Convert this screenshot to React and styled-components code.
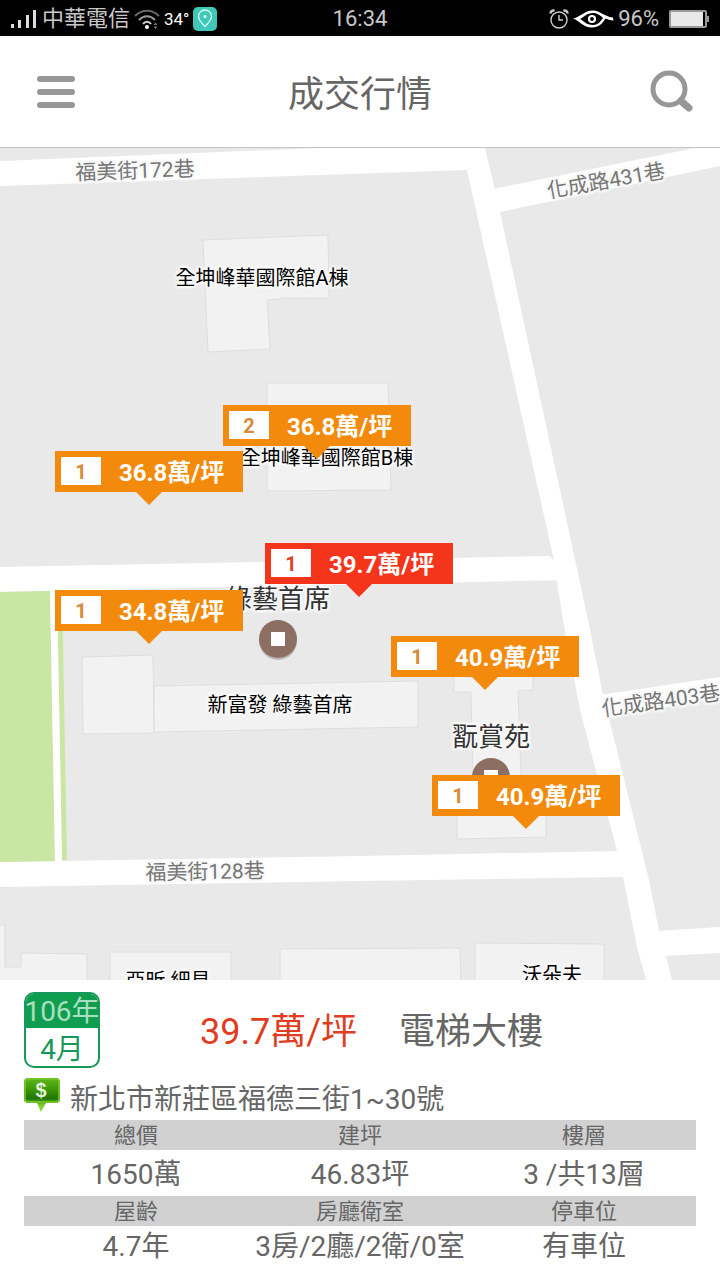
import React from 'react';
import styled, { createGlobalStyle } from 'styled-components';

const GlobalStyle = createGlobalStyle`
  * {
    box-sizing: border-box;
  }
  body {
    margin: 0;
    background: #fff;
    color: #666;
    font-family: Roboto, "Noto Sans CJK TC", sans-serif;
  }
  button {
    border: 0;
    padding: 0;
    background: none;
    font-family: inherit;
    cursor: pointer;
  }
`;

const Page = styled.div`
  display: flex;
  flex-direction: column;
  min-height: 100vh;
`;

const StatusBar = styled.div`
  display: grid;
  grid-template-columns: 1fr auto 1fr;
  align-items: center;
  height: 36px;
  padding: 0 10px;
  background: #000;
  color: #c8c8c8;
  font-size: 22px;
  line-height: 38px;
`;

const StatusGroup = styled.div`
  display: flex;
  align-items: center;
  justify-content: ${(props) => (props.$end ? 'flex-end' : 'flex-start')};
  gap: 4px;

  svg {
    flex: none;
  }
`;

const Temperature = styled.span`
  color: #fff;
  font-size: 17px;
`;

const Battery = styled.span`
  display: flex;
  padding-left: 6px;
`;

const Header = styled.header`
  display: flex;
  align-items: center;
  justify-content: space-between;
  height: 112px;
  padding: 0 26px;
  border-bottom: 1px solid #c4c4c4;
`;

const Title = styled.h1`
  margin: 0;
  padding-top: 6px;
  font-size: 36px;
  font-weight: 400;
  line-height: 48px;
`;

const IconButton = styled.button`
  display: flex;
  width: 56px;
  padding-left: 10px;
`;

const Map = styled.main`
  position: relative;
  flex: 1;
  min-height: 480px;
  overflow: hidden;
  background: #e9e9e9;
`;

const Streets = styled.svg`
  position: absolute;
  inset: 0;
  width: 100%;
  height: 100%;
`;

const labelKinds = {
  street: { size: 21, color: '#777' },
  building: { size: 20, color: '#000' },
  place: { size: 26, color: '#333' },
};

const MapLabel = styled.span`
  position: absolute;
  white-space: nowrap;
  transform: translate(-50%, -50%) rotate(${(props) => props.$angle || 0}deg);
  color: ${(props) => labelKinds[props.$kind].color};
  font-size: ${(props) => labelKinds[props.$kind].size}px;
  line-height: 28px;
  text-shadow: 2px 0 1px #f8f8f8, -2px 0 1px #f8f8f8, 0 2px 1px #f8f8f8, 0 -2px 1px #f8f8f8,
    2px 2px 2px #f8f8f8, -2px -2px 2px #f8f8f8, 2px -2px 2px #f8f8f8, -2px 2px 2px #f8f8f8;
`;

const Pin = styled.button`
  position: absolute;
  display: flex;
  align-items: flex-start;
  width: 188px;
  height: 41px;
  padding: 6px;
  transform: translateX(-50%);
  background: ${(props) => (props.$active ? '#f5351b' : '#f38a0b')};
  color: #fff;
  font-size: 24px;
  font-weight: 700;
  line-height: 32px;

  &::after {
    content: '';
    position: absolute;
    top: 100%;
    left: 50%;
    margin-left: -13px;
    border: 13px solid transparent;
    border-bottom-width: 0;
    border-top-color: ${(props) => (props.$active ? '#f5351b' : '#f38a0b')};
  }
`;

const PinCount = styled.span`
  width: 40px;
  height: 28px;
  margin-right: 18px;
  background: #fff;
  color: ${(props) => (props.$active ? '#dc4128' : '#d88a38')};
  font-size: 20px;
  line-height: 30px;
`;

const Panel = styled.section`
  padding: 12px 24px 14px;
`;

const Summary = styled.div`
  display: flex;
  align-items: center;
`;

const DateBadge = styled.div`
  flex: none;
  width: 76px;
  height: 76px;
  overflow: hidden;
  border: 2px solid #16995a;
  border-radius: 10px;
  color: #16995a;
  font-size: 28px;
  line-height: 36px;
  text-align: center;
`;

const Year = styled.div`
  display: flex;
  justify-content: center;
  height: 34px;
  background: #0f9d50;
  color: #a9dfbf;
  white-space: nowrap;
`;

const Month = styled.div`
  line-height: 44px;
`;

const Price = styled.strong`
  margin-left: 100px;
  padding-top: 4px;
  color: #e03c20;
  font-size: 36px;
  font-weight: 400;
  line-height: 48px;
`;

const HouseType = styled.span`
  margin-left: 42px;
  padding-top: 4px;
  font-size: 36px;
  line-height: 48px;
`;

const Address = styled.div`
  display: flex;
  align-items: center;
  gap: 10px;
  height: 52px;
  font-size: 28px;
  line-height: 40px;
`;

const AddressText = styled.span`
  padding-top: 12px;
`;

const Facts = styled.table`
  width: 100%;
  border-collapse: collapse;
  table-layout: fixed;
  text-align: center;
`;

const FactName = styled.th`
  height: 30px;
  padding: 2px 0 0;
  background: #d1d1d1;
  font-size: 22px;
  font-weight: 400;
  line-height: 28px;
`;

const FactValue = styled.td`
  height: ${(props) => (props.$tall ? 46 : 40)}px;
  padding: ${(props) => (props.$tall ? 4 : 2)}px 0 0;
  font-size: 28px;
  line-height: 38px;
`;

// Map drawing units, every point below is given in them
const MAP_WIDTH = 720;
const MAP_HEIGHT = 832;

const place = (x, y) => ({
  left: `${(x / MAP_WIDTH) * 100}%`,
  top: `${(y / MAP_HEIGHT) * 100}%`,
});

const roads = [
  '0,13 320,0 485,0 485,22 467,22 0,38',
  '467,22 462,0 485,0 500,64 588,472 603,547 609,570 649,732 659,783 666,808 672,832 646,832 637,799 623,729 617,703 580,562 563,472 553,408',
  '493,41 695,0 720,0 720,18 500,64',
  '0,419 550,408 570,432 0,444',
  '600,547 720,529 720,549 606,570',
  '0,714 360,708 620,703 626,729 360,733 0,739',
  '656,783 720,779 720,805 663,808',
];

const parks = ['0,444 50,443 55,713 0,714', '57,443 62,443 67,712 62,712'];

const buildings = [
  '203,92 328,87 329,150 281,150 281,151 267,152 270,201 208,204',
  '267,235 388,235 391,342 267,343',
  '154,538 418,533 418,579 154,584',
  '82,509 153,507 154,585 83,586',
  '454,528 533,526 533,542 518,543 521,627 546,660 546,689 457,691 457,660 473,627 471,544 454,544',
  '-2,777 5,777 5,819 21,819 21,805 87,806 87,840 -2,840',
  '110,804 231,804 231,840 110,840',
  '280,801 460,800 461,840 280,840',
  '475,795 604,796 604,840 475,840',
];

const labels = [
  { text: '福美街172巷', kind: 'street', x: 135, y: 23, angle: -2 },
  { text: '化成路431巷', kind: 'street', x: 606, y: 33, angle: -10 },
  { text: '化成路403巷', kind: 'street', x: 661, y: 553, angle: -8 },
  { text: '福美街128巷', kind: 'street', x: 205, y: 724, angle: -1 },
  { text: '全坤峰華國際館A棟', kind: 'building', x: 262, y: 130 },
  { text: '全坤峰華國際館B棟', kind: 'building', x: 327, y: 310 },
  { text: '新富發 綠藝首席', kind: 'building', x: 280, y: 557 },
  { text: '亞昕 細見', kind: 'building', x: 168, y: 833 },
  { text: '沃朵夫', kind: 'building', x: 552, y: 827 },
  { text: '綠藝首席', kind: 'place', x: 278, y: 451 },
  { text: '翫賞苑', kind: 'place', x: 491, y: 589 },
];

const pins = [
  { count: 2, price: '36.8', x: 317, y: 257 },
  { count: 1, price: '36.8', x: 149, y: 303 },
  { count: 1, price: '39.7', x: 359, y: 395, active: true },
  { count: 1, price: '34.8', x: 149, y: 442 },
  { count: 1, price: '40.9', x: 485, y: 488 },
  { count: 1, price: '40.9', x: 526, y: 627 },
];

const facts = [
  [
    ['總價', '1650萬'],
    ['建坪', '46.83坪'],
    ['樓層', '3 /共13層'],
  ],
  [
    ['屋齡', '4.7年'],
    ['房廳衛室', '3房/2廳/2衛/0室'],
    ['停車位', '有車位'],
  ],
];

const SignalIcon = () => (
  <svg width="28" height="20" viewBox="0 0 28 20" fill="#ddd">
    <rect x="1" y="15" width="3" height="4" />
    <rect x="8" y="11" width="3" height="8" />
    <rect x="16" y="6" width="3" height="13" />
    <rect x="23" y="1" width="3" height="18" />
  </svg>
);

const WifiIcon = () => (
  <svg width="26" height="22" viewBox="0 0 26 22" fill="none" strokeWidth="2">
    <path d="M1 8C8 1 18 1 25 8" stroke="#666" />
    <path d="M5 12C10 7 16 7 21 12" stroke="#999" />
    <path d="M9 16C11 13 15 13 17 16" stroke="#ccc" />
    <circle cx="13" cy="19" r="2" fill="#fff" />
    <path d="M19.500 17l2-2.500 2 2.500zM19.500 18.500l2 2.500 2-2.500z" fill="#777" />
  </svg>
);

const LocationBadge = () => (
  <svg width="24" height="24" viewBox="0 0 24 24">
    <rect width="24" height="24" rx="5" fill="#3fc7b7" />
    <path
      d="M12 19.500C8 15.500 5.500 12.500 5.500 9.500a6.500 6.500 0 0 1 13 0C18.500 12.500 16 15.500 12 19.500z"
      fill="none"
      stroke="#d5fff5"
      strokeWidth="1.300"
    />
    <circle cx="12" cy="9.500" r="1.600" fill="#d5fff5" />
  </svg>
);

const AlarmIcon = () => (
  <svg width="20" height="20" viewBox="0 0 20 20" fill="none" stroke="#ccc" strokeWidth="1.400">
    <circle cx="10" cy="11" r="8" />
    <path d="M10 6v5h4" />
    <path d="M1.500 4.500C1.500 2.500 3.500 1 5.500 1.700M18.500 4.500C18.500 2.500 16.500 1 14.500 1.700" strokeWidth="2.500" />
  </svg>
);

const EyeIcon = () => (
  <svg width="41" height="20" viewBox="0 0 41 20">
    <path
      d="M0 9.500C8 8 11 1.500 20 1.500c7 0 11 6 20 7l.5 3c-3 0-5-1-8-2C29 15 26 18.500 19 18.500 10 18.500 7 12 0 9.500zM7 10c4 2 6 6 13 6 5 0 7-3 10-7-3-3-6-5-10-5-6 0-9 4-13 6z"
      fill="#fff"
      fillRule="evenodd"
    />
    <circle cx="19" cy="10" r="3" fill="none" stroke="#fff" strokeWidth="2.200" />
  </svg>
);

const BatteryIcon = () => (
  <svg width="41" height="18" viewBox="0 0 41 18">
    <rect x="1" y="1" width="36" height="16" rx="1" fill="none" stroke="#999" strokeWidth="2" />
    <rect x="2" y="2" width="32" height="14" fill="#e8e8e8" />
    <rect x="38" y="6" width="2" height="6" fill="#999" />
  </svg>
);

const MenuIcon = () => (
  <svg width="39" height="34" viewBox="0 0 39 34" fill="#979797">
    <rect x="1" y="1" width="38" height="6" rx="3" />
    <rect x="1" y="14" width="38" height="6" rx="3" />
    <rect x="1" y="27" width="38" height="6" rx="3" />
  </svg>
);

const SearchIcon = () => (
  <svg width="46" height="46" viewBox="0 0 46 46" fill="none" stroke="#979797">
    <circle cx="21" cy="20" r="16" strokeWidth="5" />
    <path d="M33 32l8 7" strokeWidth="7" strokeLinecap="round" />
  </svg>
);

const MoneyIcon = () => (
  <svg width="36" height="36" viewBox="0 0 36 36">
    <defs>
      <linearGradient id="money" x1="0" y1="0" x2="0" y2="1">
        <stop offset="0" stopColor="#64b71c" />
        <stop offset="0.3" stopColor="#3f9c0a" />
        <stop offset="0.6" stopColor="#1f7603" />
        <stop offset="0.8" stopColor="#7ed030" />
        <stop offset="1" stopColor="#8ddd38" />
      </linearGradient>
    </defs>
    <path
      d="M4 2h28q4 0 4 4v17q0 4-4 4H22l-5 9-4-9H4q-4 0-4-4V6q0-4 4-4z"
      fill="url(#money)"
    />
    <path d="M4 3h28q3 0 3 3v17q0 3-3 3H4q-3 0-3-3V6q0-3 3-3z" fill="none" stroke="#79ca2b" strokeWidth="1.500" />
    <text x="17" y="21" textAnchor="middle" fill="#e4f5dc" fontFamily="Liberation Sans, sans-serif" fontSize="20" fontWeight="700">
      $
    </text>
  </svg>
);

const Poi = ({ x, y }) => (
  <g>
    <circle cx={x} cy={y + 2} r="19" fill="#bbb" />
    <circle cx={x} cy={y} r="19" fill="#8d6e63" />
    <rect x={x - 7} y={y - 7} width="14" height="14" fill="#fff" />
  </g>
);

const App = () => {
  return (
    <Page>
      <GlobalStyle />
      <StatusBar>
        <StatusGroup>
          <SignalIcon />
          <span>中華電信</span>
          <WifiIcon />
          <Temperature>34°</Temperature>
          <LocationBadge />
        </StatusGroup>
        <span>16:34</span>
        <StatusGroup $end>
          <AlarmIcon />
          <EyeIcon />
          <span>96%</span>
          <Battery>
            <BatteryIcon />
          </Battery>
        </StatusGroup>
      </StatusBar>

      <Header>
        <IconButton aria-label="選單">
          <MenuIcon />
        </IconButton>
        <Title>成交行情</Title>
        <IconButton aria-label="搜尋">
          <SearchIcon />
        </IconButton>
      </Header>

      <Map>
        <Streets viewBox={`0 0 ${MAP_WIDTH} ${MAP_HEIGHT}`} preserveAspectRatio="none">
          {roads.map((points) => (
            <polygon key={points} points={points} fill="#fff" />
          ))}
          {parks.map((points) => (
            <polygon key={points} points={points} fill="#c9e6a2" />
          ))}
          <polygon points="50,443 57,443 62,714 55,714" fill="#fff" />
          {buildings.map((points) => (
            <polygon key={points} points={points} fill="#f2f2f2" stroke="#dedede" />
          ))}
          <Poi x={278} y={491} />
          <Poi x={491} y={629} />
        </Streets>
        {labels.map((label) => (
          <MapLabel
            key={label.text}
            $kind={label.kind}
            $angle={label.angle}
            style={place(label.x, label.y)}
          >
            {label.text}
          </MapLabel>
        ))}
        {pins.map((pin) => (
          <Pin key={`${pin.x}-${pin.y}`} $active={pin.active} style={place(pin.x, pin.y)}>
            <PinCount $active={pin.active}>{pin.count}</PinCount>
            {pin.price}萬/坪
          </Pin>
        ))}
      </Map>

      <Panel>
        <Summary>
          <DateBadge>
            <Year>106年</Year>
            <Month>4月</Month>
          </DateBadge>
          <Price>39.7萬/坪</Price>
          <HouseType>電梯大樓</HouseType>
        </Summary>
        <Address>
          <MoneyIcon />
          <AddressText>新北市新莊區福德三街1~30號</AddressText>
        </Address>
        <Facts>
          {facts.map((group, i) => (
            <tbody key={i}>
              <tr>
                {group.map(([name]) => (
                  <FactName key={name} scope="col">
                    {name}
                  </FactName>
                ))}
              </tr>
              <tr>
                {group.map(([name, value]) => (
                  <FactValue key={name} $tall={i === 0}>
                    {value}
                  </FactValue>
                ))}
              </tr>
            </tbody>
          ))}
        </Facts>
      </Panel>
    </Page>
  );
};

export default App;
